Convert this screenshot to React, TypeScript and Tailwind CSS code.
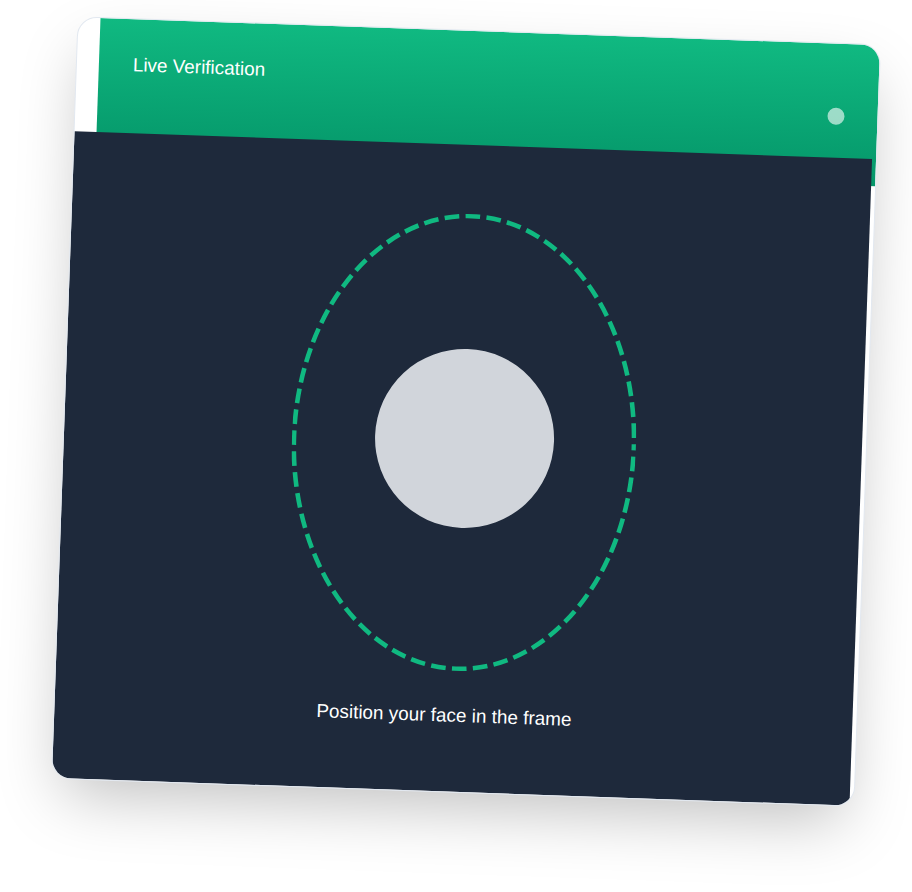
export default function App() {
  return (
    <div className="w-[912px] h-[892px] bg-white overflow-hidden pl-[64px] pt-[30px]" style={{ fontFamily: '"Liberation Sans", Arial, sans-serif' }}>
      <div className="w-[804px] h-[763px] rotate-[2deg] rounded-[20px] overflow-hidden bg-white border border-slate-200 shadow-[0_26px_64px_-12px_rgba(0,0,0,0.25)] flex flex-col">
        <div className="h-[141px] ml-[22px] shrink-0 bg-gradient-to-b from-[#10b981] to-[#059669] flex items-start justify-between pl-[34px] pr-[33px] pt-[35px] text-white">
          <span className="text-[18.9px] leading-[21px]">Live Verification</span>
          <span className="mt-[29px] w-[17px] h-[17px] rounded-full bg-white opacity-60" />
        </div>
        <div className="flex-1 -mt-[27px] mr-[4px] bg-[#1e293b] flex flex-col items-center pt-[69px]">
          <div className="relative ml-[1px] w-[344px] h-[457px] flex items-center justify-center">
            <svg width="344" height="457" viewBox="0 0 344 457" fill="none" className="absolute inset-0">
              <ellipse cx="172" cy="228.5" rx="170" ry="226.5" stroke="#10b981" strokeWidth="4.6" strokeDasharray="14.7 6.3" strokeDashoffset="-8.3" />
            </svg>
            <div className="w-[179px] h-[179px] ml-[1px] rounded-full bg-[#d1d5db] -mt-[9px]" />
          </div>
          <div className="text-white text-[18.9px] leading-[24px] mt-[33px] -ml-[19px]">Position your face in the frame</div>
        </div>
      </div>
    </div>
  );
}
